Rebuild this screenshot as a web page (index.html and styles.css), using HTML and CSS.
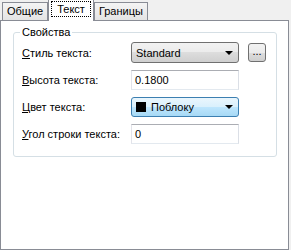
FILE: index.html
```html
<!DOCTYPE html>
<html lang="ru">
<head>
  <meta charset="UTF-8">
  <title>Текст</title>
  <link rel="stylesheet" href="styles.css">
</head>
<body>
  <div class="tabs">
    <div class="tab">Общие</div>
    <div class="tab active"><span class="focus">Текст</span></div>
    <div class="tab">Границы</div>
  </div>
  <div class="page">
    <fieldset class="group">
      <legend>Свойства</legend>
      <div class="form">
        <label><u>С</u>тиль текста:</label>
        <div class="combo">
          <span class="value">Standard</span>
          <span class="arrow"></span>
        </div>
        <button class="more">...</button>

        <label><u>В</u>ысота текста:</label>
        <div class="field">0.1800</div>
        <span></span>

        <label><u>Ц</u>вет текста:</label>
        <div class="combo hot">
          <span class="swatch"></span>
          <span class="value">Поблоку</span>
          <span class="arrow"></span>
        </div>
        <span></span>

        <label><u>У</u>гол строки текста:</label>
        <div class="field">0</div>
        <span></span>
      </div>
    </fieldset>
  </div>
</body>
</html>
```

FILE: styles.css
```css
body {
  margin: 0;
  width: 291px;
  height: 250px;
  background: #f0f0f0;
  font-family: "Liberation Sans", Arial, sans-serif;
  font-size: 11px;
  color: #000;
}
.tabs {
  display: flex;
  align-items: flex-end;
  height: 20px;
  padding-left: 2px;
}
.tab {
  height: 17px;
  line-height: 17px;
  padding: 0 4px;
  border: 1px solid #898c95;
  border-bottom: none;
  background: linear-gradient(#f4f4f4, #e4e4e4);
  position: relative;
}
.tab.active {
  height: 21px;
  line-height: 19px;
  margin-bottom: -1px;
  padding: 0 2px;
  background: #fff;
  z-index: 1;
}
.focus {
  display: inline-block;
  line-height: 14px;
  padding: 0 5px;
  border: 1px dotted #000;
}
.page {
  width: 287px;
  height: 228px;
  border: 1px solid #898c95;
  background: #fff;
}
.group {
  width: 254px;
  margin: 5px 0 0 12px;
  padding: 0 0 12px 8px;
  border: 1px solid #d5dfe5;
  border-radius: 3px;
}
.group legend {
  margin-left: -2px;
  padding: 0 2px;
  line-height: 13px;
}
.form {
  display: grid;
  grid-template-columns: 109px 108px 27px;
  grid-template-rows: 21px 20px 20px 20px;
  row-gap: 7px;
  align-items: center;
  margin-top: 3px;
}
.form label {
  white-space: nowrap;
}
.combo {
  box-sizing: border-box;
  height: 100%;
  display: flex;
  align-items: center;
  padding: 0 5px 0 4px;
  border: 1px solid #707070;
  border-radius: 3px;
  background: linear-gradient(#f2f2f2 0%, #ebebeb 50%, #dddddd 50%, #cfcfcf 100%);
}
.combo.hot {
  border-color: #3c7fb1;
  background: linear-gradient(#eaf6fd 0%, #d9f0fc 50%, #bee6fd 50%, #a7d9f5 100%);
}
.combo .value {
  flex: 1;
}
.swatch {
  width: 10px;
  height: 10px;
  background: #000;
  margin-right: 5px;
}
.arrow {
  width: 0;
  height: 0;
  border-left: 4px solid transparent;
  border-right: 4px solid transparent;
  border-top: 4px solid #000;
}
.field {
  box-sizing: border-box;
  height: 100%;
  line-height: 18px;
  padding: 0 3px;
  border: 1px solid;
  border-color: #abadb3 #dbdfe6 #e3e9ef #e2e3ea;
  background: #fff;
}
.more {
  justify-self: end;
  width: 18px;
  height: 19px;
  padding: 0 0 3px;
  font: inherit;
  line-height: 10px;
  border: 1px solid #707070;
  border-radius: 3px;
  background: linear-gradient(#f2f2f2 0%, #ebebeb 50%, #dddddd 50%, #cfcfcf 100%);
}
```
